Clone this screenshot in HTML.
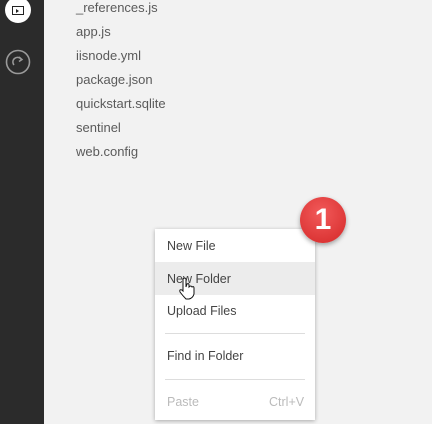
<!DOCTYPE html><html><head><style>
body{margin:0;width:432px;height:424px;background:#f2f2f2;font-family:"Liberation Sans",sans-serif;position:relative;overflow:hidden}
.side{position:absolute;left:0;top:0;width:44px;height:424px;background:#2b2b2b}
.f{position:absolute;left:76px;font-size:13px;color:#5a5a5a}
.menu{position:absolute;left:155px;top:229px;width:160px;height:191px;background:#fff;box-shadow:0 1px 4px rgba(0,0,0,.3)}
.i{position:absolute;left:12px;font-size:12.5px;color:#444}
.sep{position:absolute;left:10px;width:140px;height:1px;background:#ddd}
</style></head><body>
<div class="side">
<div style="position:absolute;left:5px;top:-3px;width:26px;height:26px;border-radius:50%;background:#fff"></div>
<div style="position:absolute;left:12px;top:6px;width:10px;height:7px;border:1px solid #222"></div>
<div style="position:absolute;left:16px;top:9px;width:0;height:0;border-left:3px solid #222;border-top:2px solid transparent;border-bottom:2px solid transparent"></div>
<svg style="position:absolute;left:5px;top:49px" width="26" height="26"><circle cx="13" cy="13" r="11.5" fill="none" stroke="#9a9a9a" stroke-width="1.6"/><path d="M9 16 A4.5 4.5 0 0 1 16 10" fill="none" stroke="#9a9a9a" stroke-width="1.5"/><path d="M14 8 L17 10.5 L14 12.5" fill="none" stroke="#9a9a9a" stroke-width="1.5"/></svg>
</div>
<div class="f" style="top:0px">_references.js</div>
<div class="f" style="top:24px">app.js</div>
<div class="f" style="top:48px">iisnode.yml</div>
<div class="f" style="top:72px">package.json</div>
<div class="f" style="top:96px">quickstart.sqlite</div>
<div class="f" style="top:120px">sentinel</div>
<div class="f" style="top:144px">web.config</div>
<div class="menu">
<div class="i" style="top:10px">New File</div>
<div style="position:absolute;left:0;top:33px;width:160px;height:33px;background:#ececec"></div>
<div class="i" style="top:43px">New Folder</div>
<div class="i" style="top:75px">Upload Files</div>
<div class="sep" style="top:104px"></div>
<div class="i" style="top:120px">Find in Folder</div>
<div class="sep" style="top:150px"></div>
<div class="i" style="top:166px;color:#bbb">Paste</div>
<div class="i" style="top:166px;left:114px;color:#bbb">Ctrl+V</div>
</div>
<svg style="position:absolute;left:178px;top:277px" width="20" height="24"><path d="M5 2 Q7 0 8 2 L8 10 L9 7 Q11 6 11 8 L11 10 Q13 8 14 10 Q16 9 16 11 L16 17 Q15 21 11 22 L8 22 Q5 19 2 15 Q1 12 4 13 L5 14 Z" fill="#fff" stroke="#111" stroke-width="1"/></svg>
<div style="position:absolute;left:300px;top:197px;width:46px;height:46px;border-radius:50%;background:radial-gradient(circle at 45% 35%,#f25a5a,#d42828);box-shadow:0 2px 5px rgba(0,0,0,.35);color:#fff;font-weight:bold;font-size:30px;text-align:center;line-height:46px">1</div>
</body></html>
